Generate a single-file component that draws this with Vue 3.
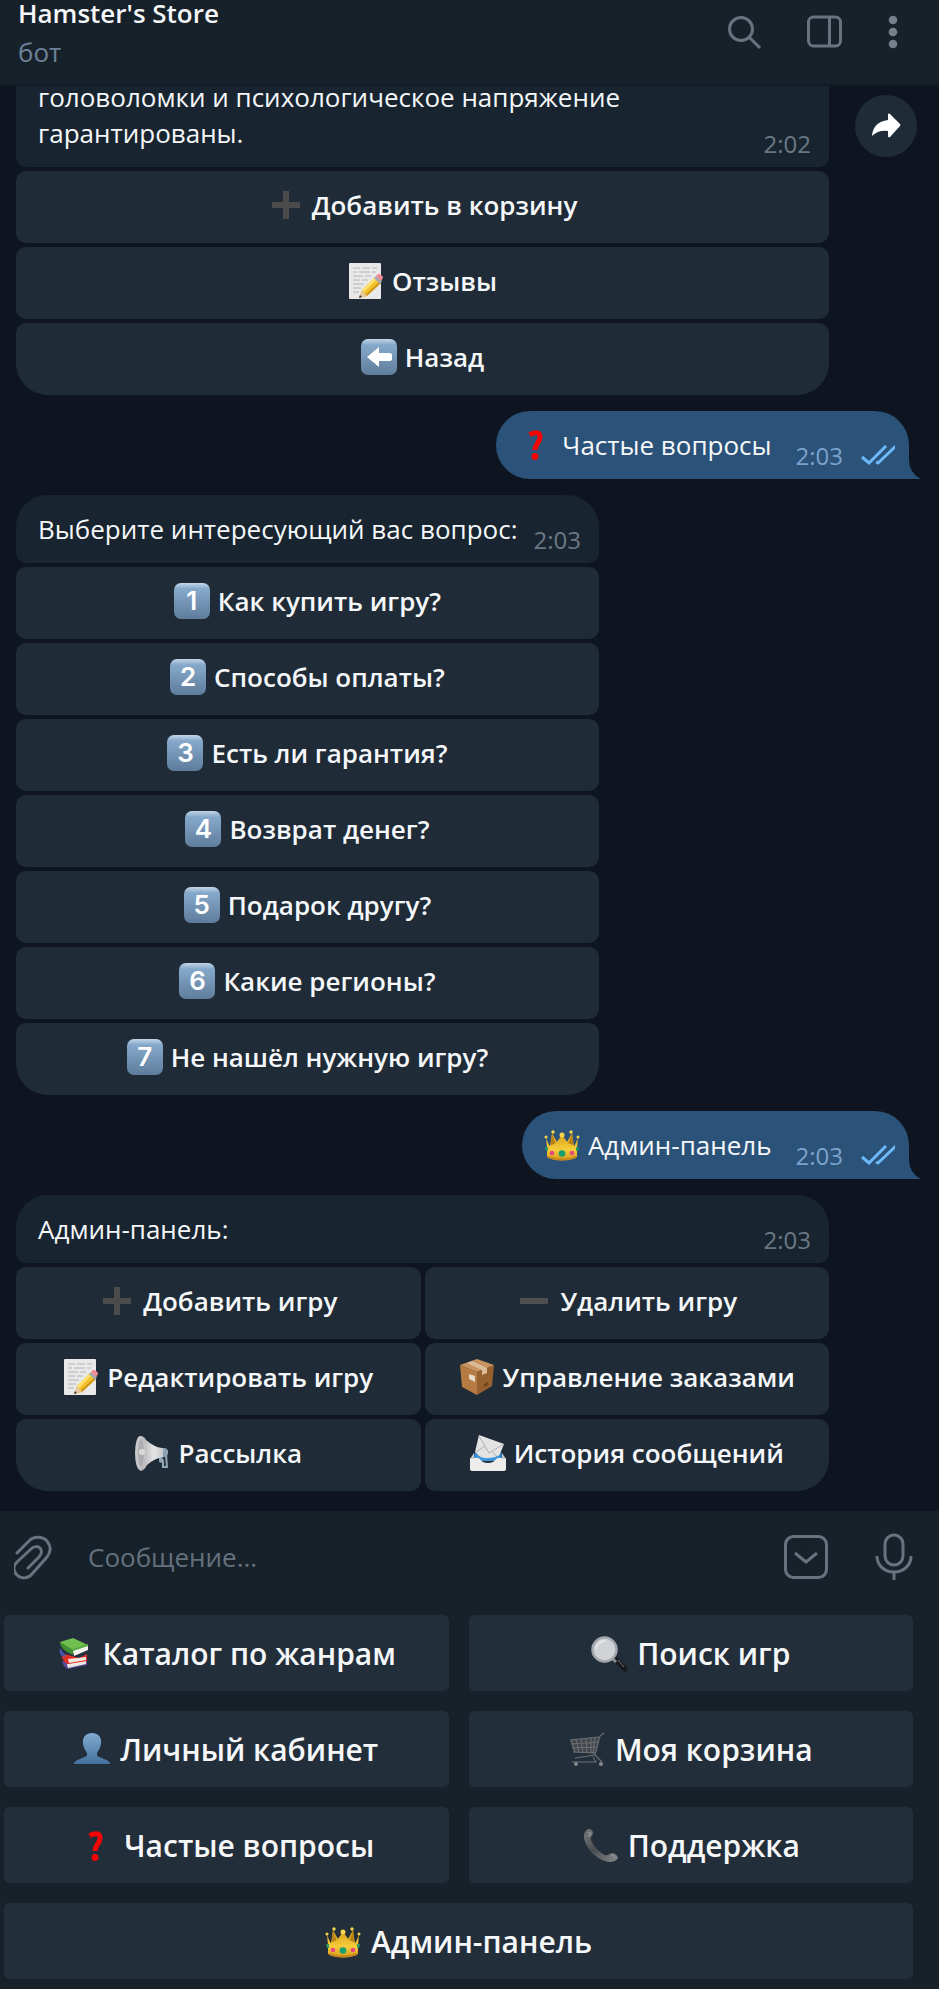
<template>
  <div class="app">
    <!-- Emoji sprite -->
    <svg class="sprite" width="0" height="0" aria-hidden="true">
      <defs>
        <linearGradient id="g-tile" x1="0" y1="0" x2="0" y2="1">
          <stop offset="0" stop-color="#c3d6e9" />
          <stop offset="0.16" stop-color="#86a9cb" />
          <stop offset="1" stop-color="#5f7c9b" />
        </linearGradient>
        <linearGradient id="g-gold" x1="0" y1="0" x2="0" y2="1">
          <stop offset="0" stop-color="#d9a21c" />
          <stop offset="0.6" stop-color="#f7cd3b" />
          <stop offset="1" stop-color="#d79b1e" />
        </linearGradient>
        <linearGradient id="g-user" x1="0" y1="0" x2="0" y2="1">
          <stop offset="0" stop-color="#80abd0" />
          <stop offset="1" stop-color="#44719c" />
        </linearGradient>
        <linearGradient id="g-horn" x1="0" y1="0" x2="1" y2="0">
          <stop offset="0" stop-color="#a9a9ab" />
          <stop offset="0.5" stop-color="#e6e6e7" />
          <stop offset="1" stop-color="#b4b7ba" />
        </linearGradient>
        <linearGradient id="g-phone" x1="0" y1="0" x2="1" y2="1">
          <stop offset="0" stop-color="#77797b" />
          <stop offset="0.45" stop-color="#4b4e51" />
          <stop offset="1" stop-color="#858789" />
        </linearGradient>
      </defs>

      <symbol id="e-plus" viewBox="0 0 36 36">
        <path d="M15 4h6v11h11v6H21v11h-6V21H4v-6h11z" fill="#4c4b4b" />
      </symbol>
      <symbol id="e-minus" viewBox="0 0 36 36">
        <path d="M4 15h28v6H4z" fill="#504f4f" />
      </symbol>
      <symbol id="e-memo" viewBox="0 0 36 36">
        <rect x="1" y="0" width="32" height="36" rx="1" fill="#e9e9e9" />
        <path d="M5 5h7M14 5h8M24 5h5M5 9h4M11 9h11M24 9h4M5 13h10M17 13h6M5 17h7M14 17h6M5 21h11M5 25h8M5 29h6" stroke="#b4b4b4" stroke-width="1" />
        <path d="M11 35l3-8 13-13 6 6-14 13z" fill="#f5c32b" />
        <path d="M14 27l13-13 2 2-13 13z" fill="#ffe071" />
        <path d="M17 32l14-13 2 1-14 13z" fill="#d2961b" />
        <path d="M11 35l3-8 5 6z" fill="#e4c79d" />
        <path d="M11 35l1-3 2 2z" fill="#333" />
        <path d="M26 15l2-2 6 5-2 3z" fill="#a4abb0" />
        <path d="M28 13l2-2c1-1 6 3 5 4l-2 3z" fill="#f08b93" />
      </symbol>
      <symbol id="e-back" viewBox="0 0 36 36">
        <rect width="36" height="36" rx="7" fill="url(#g-tile)" />
        <path d="M6 18L18 8v6h10q3 0 3 2v4q0 2-3 2H18v6z" fill="#fff" />
      </symbol>
      <symbol id="e-question" viewBox="0 0 36 36">
        <path d="M11.500 7.500Q22 3 22 10c0 6-5 6.500-5 13" fill="none" stroke="#f20505" stroke-width="5" />
        <circle cx="17" cy="29.500" r="3.400" fill="#f20505" />
      </symbol>
      <symbol id="e-crown" viewBox="0 0 36 36">
        <path d="M2 11l4 9 2-14 6 11 4-8 4 8 6-11 2 14 4-9-2 20q-14 5-28 0z" fill="url(#g-gold)" />
        <path d="M8 7l4 10-6 6zM28 7l-4 10 6 6z" fill="#b97f12" />
        <path d="M3 20l9-4 6-8 6 8 9 4v10q-15 5-30 0z" fill="url(#g-gold)" />
        <path d="M4 29q14 5 28 0v2q-14 5-28 0z" fill="#c2861b" />
        <g fill="#f7d64e">
          <circle cx="2" cy="10" r="1.500" />
          <circle cx="9" cy="5" r="1.700" />
          <circle cx="18" cy="8" r="2.500" />
          <circle cx="27" cy="5" r="1.700" />
          <circle cx="34" cy="10" r="1.500" />
        </g>
        <circle cx="18" cy="26.500" r="3.300" fill="#16a06f" />
        <circle cx="8" cy="26" r="2.300" fill="#e4487c" />
        <circle cx="28" cy="26" r="2.300" fill="#e4487c" />
        <path d="M1 20h3v4H2zM32 20h3l-1 4h-2z" fill="#2c9a62" />
      </symbol>
      <symbol id="e-box" viewBox="0 0 36 36">
        <path d="M1 6l17 7v23L3 28z" fill="#b67b42" />
        <path d="M18 13l17-7-2 21-15 9z" fill="#96602f" />
        <path d="M1 6L18 0l17 6-17 7z" fill="#c99360" />
        <path d="M8 4l5-2 15 7v5l-5 2v-5z" fill="#d9bc97" />
        <path d="M10 15l6 2v6l-6-3z" fill="#e6dacb" />
        <path d="M25 25l4-2v3l-4 2z" fill="#6f4520" />
      </symbol>
      <symbol id="e-horn" viewBox="0 0 36 36">
        <path d="M25 21l8-3 1 15h-6v-5l-3-1z" fill="#8fa6b5" />
        <path d="M28 22l3-1 1 10h-2v-5z" fill="#26333e" />
        <path d="M7 1q3 0 5 4 8 7 16 8 6 0 6 4t-5 5q-8 1-16 8-3 6-7 6z" fill="url(#g-horn)" />
        <ellipse cx="6" cy="18" rx="5" ry="17" fill="#c7c7c9" />
        <ellipse cx="7" cy="18" rx="3" ry="14" fill="#adadb0" />
        <circle cx="8" cy="17" r="3" fill="#d9d9da" />
        <path d="M29 13q4 0 5 3v3q-2 2-5 3z" fill="#8aa3b4" />
      </symbol>
      <symbol id="e-mail" viewBox="0 0 36 36">
        <path d="M5 17h26l4 8H1z" fill="#2d6fae" />
        <path d="M5 17L9 0l25 9-6 15H12z" fill="#e3e3e3" />
        <path d="M9 1l10 17L34 9M6 17l9-6M22 16l6 7" fill="none" stroke="#b0b0b2" stroke-width="1" />
        <path d="M5 19q12 8 25 1l2 6H4z" fill="#3f95da" />
        <path d="M0 23h8c2 0 3 5 10 5s8-5 10-5h8v11q0 2-2 2H2q-2 0-2-2z" fill="#ececea" />
        <path d="M4 18l-4 6h4zM32 18l4 6h-4z" fill="#c9ccce" />
      </symbol>
      <symbol id="e-books" viewBox="0 0 36 36">
        <path d="M5 25l17 3 8-4v5l-19 4q-5-2-6-8z" fill="#5b4a98" />
        <path d="M10 28l19-4v4l-18 4z" fill="#eee9e4" />
        <path d="M4 17l18 5 8-4v7l-19 3q-6-2-7-11z" fill="#e03025" />
        <path d="M11 23l18-2v3l-17 3z" fill="#f2e6e0" />
        <path d="M3 12q-2 7 4 9l2-1z" fill="#4b53a8" />
        <path d="M3 6l13-4 15 7-15 8q-12-4-13-11z" fill="#6fbe4f" />
        <path d="M3 6l13 8v5Q3 14 3 6z" fill="#3f8e32" />
        <path d="M16 14l15-5v5l-14 6z" fill="#f3f1ec" />
        <path d="M16 13l15-5v2l-15 5z" fill="#57a93f" />
      </symbol>
      <symbol id="e-lens" viewBox="0 0 36 36">
        <path d="M22 21l12 12" stroke="#17191b" stroke-width="5" stroke-linecap="round" />
        <path d="M21 22l4 4" stroke="#888c91" stroke-width="3" />
        <path d="M27 24l6 7" stroke="#777" stroke-width="1" />
        <circle cx="13.500" cy="13.500" r="12" fill="#d0d2d6" stroke="#a3a7ad" stroke-width="2.500" />
        <path d="M5 13a8.500 8.500 0 0 1 9-8" fill="none" stroke="#e4e5e7" stroke-width="2" />
      </symbol>
      <symbol id="e-user" viewBox="0 0 36 36">
        <path d="M18 1c7 0 10 5 9 11-1 5-3 7-4 9-1 4 3 4 7 6q6 2 6 5H0q0-3 6-5c4-2 8-2 7-6-1-2-3-4-4-9C8 6 11 1 18 1z" fill="url(#g-user)" />
      </symbol>
      <symbol id="e-cart" viewBox="0 0 36 36">
        <path d="M1 8l29-3-3 17-22-2z" fill="#43474d" />
        <path d="M35 1l-4 3-5 19-20 3M1 8l29-3M2 12l27-2M3 16l25-1M4 20l23 1M2 8l4 12M7 8l3 12M12 7l2 14M17 7l1 14M22 6v15M26 6l-2 16M26 23l7 7M3 30h24l-3-5" fill="none" stroke="#6b6e72" stroke-width="1.100" />
        <circle cx="7" cy="32" r="2" fill="#88898a" />
        <circle cx="32" cy="32" r="2" fill="#88898a" />
      </symbol>
      <symbol id="e-phone" viewBox="0 0 36 36">
        <path d="M6 1q5 0 5 4c0 3-3 4-2 7 3 7 8 12 14 15 3 1 5-2 8-2q4 1 5 5c-2 4-8 5-13 3C13 30 5 21 2 11Q1 4 6 1z" fill="url(#g-phone)" />
        <path d="M6 5q3-1 3 1L6 9M28 28l3-1q2 1 1 3" fill="none" stroke="#8d8e8f" stroke-width="1.500" />
      </symbol>
    </svg>

    <header class="topbar">
      <div class="topbar__info">
        <h1 class="topbar__title">Hamster's Store</h1>
        <span class="topbar__status">бот</span>
      </div>
      <nav class="topbar__actions">
        <button type="button" class="icon-btn" aria-label="Поиск">
          <svg width="36" height="36" viewBox="0 0 36 36">
            <circle cx="14" cy="15" r="11.500" />
            <path d="M22 23l11 11" />
          </svg>
        </button>
        <button type="button" class="icon-btn" aria-label="Боковая панель">
          <svg width="36" height="36" viewBox="0 0 36 36">
            <rect x="1.500" y="3" width="32" height="29" rx="5" />
            <path d="M22.500 3v29" />
          </svg>
        </button>
        <button type="button" class="icon-btn" aria-label="Меню">
          <svg width="12" height="36" viewBox="0 0 12 36" class="dots">
            <circle cx="6" cy="6" r="4.300" />
            <circle cx="6" cy="18" r="4.300" />
            <circle cx="6" cy="30" r="4.300" />
          </svg>
        </button>
      </nav>
    </header>

    <main class="chat">
      <template v-for="(msg, i) in messages" :key="i">
        <div v-if="msg.out" class="out">
          <svg class="emoji"><use :href="`#e-${msg.emoji}`" /></svg>
          <p class="out__text">{{ msg.text }}</p>
          <time class="time time--out">{{ msg.time }}</time>
          <svg class="out__checks" width="36" height="20" viewBox="0 0 36 20">
            <path d="M1 12l7 6L25 1M15 17l2 1L35 1" />
          </svg>
          <svg class="out__tail" width="26" height="34" viewBox="0 0 26 34">
            <path d="M0 34h26Q14 28 14 15V0H0z" />
          </svg>
        </div>

        <div v-else class="row" :class="{ 'row--first': i === 0 }">
          <section class="card" :class="{ 'card--wide': msg.wide }">
            <div class="bubble">
              <p class="bubble__text">{{ msg.text }}</p>
              <time class="time">{{ msg.time }}</time>
            </div>
            <div class="kb" :class="{ 'kb--two': msg.cols === 2 }">
              <button v-for="btn in msg.buttons" :key="btn.text" type="button" class="kb__btn">
                <span v-if="btn.key" class="keycap">{{ btn.key }}</span>
                <svg v-else class="emoji"><use :href="`#e-${btn.emoji}`" /></svg>
                <span>{{ btn.text }}</span>
              </button>
            </div>
          </section>
          <button v-if="msg.share" type="button" class="share" aria-label="Переслать">
            <svg width="30" height="26" viewBox="0 0 30 26">
              <path d="M17 1q1-1 2 0l10 10q1 1 0 2L19 24q-2 1-2-1v-5Q7 17 1 23 2 9 17 7z" />
            </svg>
          </button>
        </div>
      </template>
    </main>

    <footer class="footer">
      <form class="composer" @submit.prevent>
        <button type="button" class="icon-btn icon-btn--thin" aria-label="Прикрепить файл">
          <svg width="40" height="46" viewBox="0 0 40 46">
            <path d="M3 19L15 7C20 2 28 2 33 7c4 5 4 11 0 16L18 40C14 45 7 45 3 41c-4-4-4-9 0-13L17 15c3-3 7-3 9-1s2 6-1 9L14 34" />
          </svg>
        </button>
        <input v-model="draft" class="composer__input" type="text" placeholder="Сообщение..." aria-label="Сообщение" />
        <button type="button" class="icon-btn" aria-label="Скрыть клавиатуру">
          <svg width="46" height="46" viewBox="0 0 46 46">
            <rect x="2.500" y="2.500" width="41" height="41" rx="8" />
            <path d="M12 19l11 9 11-9" />
          </svg>
        </button>
        <button type="button" class="icon-btn" aria-label="Голосовое сообщение">
          <svg width="38" height="48" viewBox="0 0 38 48">
            <rect x="10" y="2" width="18" height="30" rx="9" />
            <path d="M2 23c0 9 7 16 17 16s17-7 17-16M19 39v8" />
          </svg>
        </button>
      </form>

      <div class="menu">
        <button
          v-for="item in menu"
          :key="item.text"
          type="button"
          class="menu__btn"
          :class="{ 'menu__btn--full': item.full }"
        >
          <svg class="emoji"><use :href="`#e-${item.emoji}`" /></svg>
          <span>{{ item.text }}</span>
        </button>
      </div>
    </footer>
  </div>
</template>

<script setup>
import { ref } from 'vue';

const draft = ref('');

const messages = [
  {
    text: 'головоломки и психологическое напряжение гарантированы.',
    time: '2:02',
    wide: true,
    share: true,
    buttons: [
      { emoji: 'plus', text: 'Добавить в корзину' },
      { emoji: 'memo', text: 'Отзывы' },
      { emoji: 'back', text: 'Назад' },
    ],
  },
  { out: true, emoji: 'question', text: 'Частые вопросы', time: '2:03' },
  {
    text: 'Выберите интересующий вас вопрос:',
    time: '2:03',
    buttons: [
      { key: '1', text: 'Как купить игру?' },
      { key: '2', text: 'Способы оплаты?' },
      { key: '3', text: 'Есть ли гарантия?' },
      { key: '4', text: 'Возврат денег?' },
      { key: '5', text: 'Подарок другу?' },
      { key: '6', text: 'Какие регионы?' },
      { key: '7', text: 'Не нашёл нужную игру?' },
    ],
  },
  { out: true, emoji: 'crown', text: 'Админ-панель', time: '2:03' },
  {
    text: 'Админ-панель:',
    time: '2:03',
    wide: true,
    cols: 2,
    buttons: [
      { emoji: 'plus', text: 'Добавить игру' },
      { emoji: 'minus', text: 'Удалить игру' },
      { emoji: 'memo', text: 'Редактировать игру' },
      { emoji: 'box', text: 'Управление заказами' },
      { emoji: 'horn', text: 'Рассылка' },
      { emoji: 'mail', text: 'История сообщений' },
    ],
  },
];

const menu = [
  { emoji: 'books', text: 'Каталог по жанрам' },
  { emoji: 'lens', text: 'Поиск игр' },
  { emoji: 'user', text: 'Личный кабинет' },
  { emoji: 'cart', text: 'Моя корзина' },
  { emoji: 'question', text: 'Частые вопросы' },
  { emoji: 'phone', text: 'Поддержка' },
  { emoji: 'crown', text: 'Админ-панель', full: true },
];
</script>

<style>
body {
  background: #0e1621;
}
</style>

<style scoped>
.app {
  min-height: 100vh;
  display: flex;
  flex-direction: column;
  background: #0e1520;
  color: #f5f7f9;
  font-family: 'Open Sans', 'Noto Sans', sans-serif;
  font-size: 26px;
  line-height: 36px;
}

.sprite {
  position: absolute;
}

button {
  border: 0;
  padding: 0;
  color: inherit;
  font: inherit;
  cursor: pointer;
}

p,
h1 {
  margin: 0;
}

.emoji {
  width: 36px;
  height: 36px;
  flex-shrink: 0;
}

/* Header */
.topbar {
  position: relative;
  z-index: 1;
  height: 86px;
  box-sizing: border-box;
  padding: 0 40px 0 18px;
  display: flex;
  justify-content: space-between;
  background: #17212a;
  border-bottom: 2px solid #121b25;
}

.topbar__info {
  display: flex;
  flex-direction: column;
  gap: 8px;
}

.topbar__title {
  font-size: 26px;
  line-height: 26px;
  font-weight: 600;
}

.topbar__status {
  color: #6d8299;
}

.topbar__actions {
  display: flex;
  align-items: flex-start;
  gap: 44px;
  padding-top: 14px;
}

.icon-btn {
  display: grid;
  place-items: center;
  background: none;
  flex-shrink: 0;
}

.icon-btn svg {
  fill: none;
  stroke: #67737e;
  stroke-width: 3;
}

.icon-btn--thin svg {
  stroke-linecap: round;
}

.icon-btn .dots {
  fill: #75808a;
  stroke: none;
}

/* Messages */
.chat {
  flex: 1;
  display: flex;
  flex-direction: column;
  gap: 16px;
  padding: 0 22px 20px 16px;
}

.row {
  display: flex;
  align-items: flex-start;
  gap: 26px;
}

/* the oldest visible message is scrolled under the header */
.row--first {
  margin-top: -7px;
}

.card {
  display: flex;
  flex-direction: column;
  gap: 4px;
  min-width: 0;
}

.card--wide {
  width: calc(100% - 88px);
}

.bubble {
  display: flex;
  align-items: flex-end;
  justify-content: space-between;
  gap: 16px;
  padding: 0 18px 0 22px;
  background: #182530;
  border-radius: 32px 32px 10px 10px;
}

.row--first .bubble {
  border-radius: 0 0 10px 10px;
}

.bubble__text {
  padding: 16px 0;
  max-width: 620px;
}

.row--first .bubble__text {
  padding-top: 0;
}

.time {
  padding-bottom: 11px;
  color: #6a7884;
  font-size: 24px;
  line-height: 24px;
}

.kb {
  display: grid;
  gap: 4px;
}

.kb--two {
  grid-template-columns: 1fr 1fr;
}

.kb__btn {
  height: 72px;
  padding-bottom: 4px;
  display: flex;
  align-items: center;
  justify-content: center;
  gap: 8px;
  background: #1f2c38;
  border-radius: 10px;
  font-weight: 600;
}

.kb__btn:last-child {
  border-bottom-left-radius: 32px;
  border-bottom-right-radius: 32px;
}

.kb--two .kb__btn:last-child {
  border-bottom-left-radius: 10px;
}

.kb--two .kb__btn:nth-last-child(2) {
  border-bottom-left-radius: 32px;
}

.keycap {
  width: 36px;
  height: 36px;
  border-radius: 7px;
  background: linear-gradient(#c3d6e9, #86a9cb 16%, #5f7c9b);
  color: #fff;
  font-family: Inter, 'Liberation Sans', sans-serif;
  font-size: 26px;
  line-height: 36px;
  text-align: center;
}

.share {
  width: 62px;
  height: 62px;
  margin-top: 16px;
  display: grid;
  place-items: center;
  flex-shrink: 0;
  border-radius: 50%;
  background: #1f2c38;
}

.share svg {
  fill: #fff;
}

.out {
  position: relative;
  align-self: flex-end;
  height: 68px;
  box-sizing: border-box;
  margin-right: 8px;
  padding: 0 12px 0 22px;
  display: flex;
  align-items: center;
  gap: 8px;
  background: #2b5278;
  border-radius: 34px 34px 0 34px;
}

.time--out {
  align-self: flex-end;
  margin-left: 16px;
  color: #7ba3cd;
}

.out__checks {
  align-self: flex-end;
  margin: 0 0 14px 10px;
  fill: none;
  stroke: #6cb8f8;
  stroke-width: 3;
}

.out__tail {
  position: absolute;
  right: -12px;
  bottom: 0;
  fill: #2b5278;
}

/* Composer and reply keyboard */
.footer {
  background: #17212a;
}

.composer {
  height: 92px;
  padding: 0 26px 0 14px;
  display: flex;
  align-items: center;
  gap: 46px;
}

.composer__input {
  flex: 1;
  min-width: 0;
  margin-left: -12px;
  padding: 0;
  border: 0;
  outline: none;
  background: none;
  color: #f5f7f9;
  font: inherit;
}

.composer__input::placeholder {
  color: #64717d;
  opacity: 1;
}

.menu {
  display: grid;
  grid-template-columns: 1fr 1fr;
  gap: 20px;
  padding: 12px 26px 10px 4px;
}

.menu__btn {
  height: 76px;
  padding-top: 2px;
  display: flex;
  align-items: center;
  justify-content: center;
  gap: 10px;
  background: #232e3b;
  border-radius: 6px;
  font-size: 30px;
  font-weight: 600;
}

.menu__btn--full {
  grid-column: 1 / -1;
}
</style>
